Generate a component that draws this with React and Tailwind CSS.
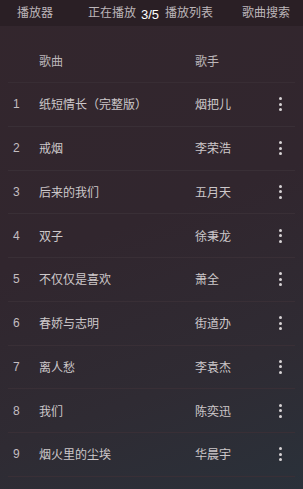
import React from "react";

const songs = [
  ["纸短情长（完整版）", "烟把儿"],
  ["戒烟", "李荣浩"],
  ["后来的我们", "五月天"],
  ["双子", "徐秉龙"],
  ["不仅仅是喜欢", "萧全"],
  ["春娇与志明", "街道办"],
  ["离人愁", "李袁杰"],
  ["我们", "陈奕迅"],
  ["烟火里的尘埃", "华晨宇"],
];

function Dots() {
  return (
    <div className="flex flex-col items-center gap-[2.5px]">
      <span className="w-[3px] h-[3px] rounded-full bg-[#d8d4d6]" />
      <span className="w-[3px] h-[3px] rounded-full bg-[#d8d4d6]" />
      <span className="w-[3px] h-[3px] rounded-full bg-[#d8d4d6]" />
    </div>
  );
}

export default function App() {
  return (
    <div
      className="relative w-[303px] h-[489px] overflow-hidden bg-[linear-gradient(160deg,#33262d_0%,#31262e_45%,#2f2b33_75%,#2a313a_100%)] text-[#c8c3c6]"
      style={{ fontFamily: '"Noto Sans CJK SC", "Noto Sans", sans-serif' }}
    >
      <div className="relative h-[26px] bg-[#2a1f25] flex items-center text-[12px] text-[#bdb6ba]">
        <span className="absolute left-[17px] top-[4px] leading-[16px]">播放器</span>
        <span className="absolute left-[88px] top-[4px] leading-[16px]">正在播放</span>
        <span className="absolute left-[165px] top-[4px] leading-[16px]">播放列表</span>
        <span className="absolute left-[242px] top-[4px] leading-[16px]">歌曲搜索</span>
        <span
          className="absolute left-[141px] top-[7px] leading-[16px] text-[13px] text-white"
          style={{ fontFamily: '"Liberation Sans", sans-serif' }}
        >
          3/5
        </span>
      </div>
      <div className="pt-[14px] px-[8px]">
        <div className="h-[43px] flex items-center text-[12px] text-[#bcb6b9] border-b border-[#382d34]">
          <span className="w-[31px]" />
          <span className="w-[156px]">歌曲</span>
          <span>歌手</span>
        </div>
        {songs.map(([name, singer], i) => (
          <div
            key={i}
            className="h-[43.75px] flex items-center text-[12px] border-b border-[#392f36]"
          >
            <span
              className="w-[31px] pl-[5px] text-[#c3bdc0]"
              style={{ fontFamily: '"Liberation Sans", sans-serif' }}
            >
              {i + 1}
            </span>
            <span className="w-[156px] text-[#cdc8ca]">{name}</span>
            <span className="flex-1 text-[#cdc8ca]">{singer}</span>
            <span className="w-[24px] flex justify-center mr-[3px]">
              <Dots />
            </span>
          </div>
        ))}
      </div>
    </div>
  );
}
